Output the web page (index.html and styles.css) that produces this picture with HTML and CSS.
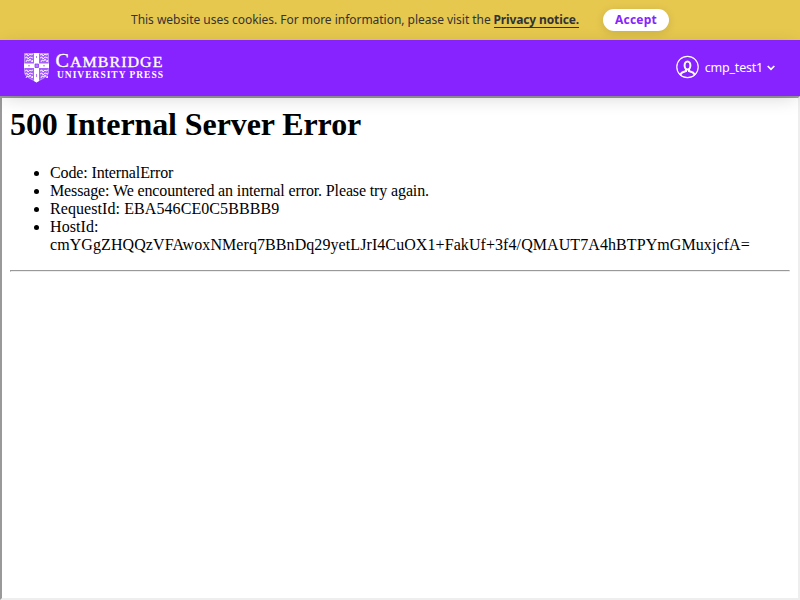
FILE: index.html
```html
<!DOCTYPE html>
<html lang="en">
<head>
<meta charset="utf-8">
<title>Cambridge University Press</title>
<link rel="stylesheet" href="styles.css">
</head>
<body>
<div class="cookies">
  <p class="cookies-text"><span class="cookies-copy">This website uses cookies. For more information, please visit the</span><a class="privacy">Privacy notice.</a></p>
  <button class="accept">Accept</button>
</div>
<header class="header">
  <svg class="logo" width="142" height="32" viewBox="0 0 142 32" role="img">
    <defs>
      <g id="lion" fill="none" stroke="#fff" stroke-width="1" opacity=".85">
        <path d="M1 3l2-1 1 2 2-2 1 1 2-1M1 6l2-1 1 2 2-2 3 1M2 10l1-2 2 1 1-2 2 3M8.500 8v2"/>
      </g>
    </defs>
    <path d="M.5 1.500h24V20c0 5-7 7-12 10C7.500 27 .5 25 .5 20Z" fill="#fff" fill-opacity=".28" stroke="#fff" stroke-opacity=".4"/>
    <use href="#lion"/>
    <use href="#lion" x="15"/>
    <use href="#lion" y="16"/>
    <use href="#lion" x="15" y="16"/>
    <path d="M10 1h5v10.500h10v4.500H15V29l-2.500 1.500L10 29V16H0v-4.500h10Z" fill="#fff"/>
    <path d="M11 12h3.500v3.500H11Z" fill="#b77bff" stroke="#8623ff" stroke-width=".7"/>
    <path d="M12.500 4v2M12.500 22v3M4 13.800h2M19 13.800h2" stroke="#b77bff"/>
    <text class="logo-name" x="31.500" y="15.300" textLength="108" lengthAdjust="spacingAndGlyphs"><tspan font-size="19.500">C</tspan>AMBRIDGE</text>
    <text class="logo-press" x="33" y="26" textLength="106" lengthAdjust="spacing">UNIVERSITY PRESS</text>
  </svg>
  <div class="user">
    <svg width="23" height="24" viewBox="0 0 23 24" fill="none" stroke="#fff">
      <circle cx="11.500" cy="12" r="10.700" stroke-width="1.200"/>
      <ellipse cx="11.500" cy="10.500" rx="2.900" ry="4" stroke-width="2"/>
      <path d="M10 14v2L6 17.700l-2 2.300M13 14v2l4 1.700 2 2.300" stroke-width="2"/>
    </svg>
    <span class="user-name">cmp_test1</span>
    <svg class="chevron" width="8" height="6" viewBox="0 0 8 6" fill="none" stroke="#fff" stroke-width="1.700"><path d="M.7 1 4 4.300 7.300 1"/></svg>
  </div>
</header>
<main class="frame">
  <h1>500 Internal Server Error</h1>
  <ul>
    <li class="tight">Code: InternalError</li>
    <li class="tight">Message: We encountered an internal error. Please try again.</li>
    <li class="loose">RequestId: EBA546CE0C5BBBB9</li>
    <li class="loose">HostId: cmYGgZHQQzVFAwoxNMerq7BBnDq29yetLJrI4CuOX1+FakUf+3f4/QMAUT7A4hBTPYmGMuxjcfA=</li>
  </ul>
  <hr>
</main>
</body>
</html>
```
FILE: styles.css
```css
* { box-sizing: border-box; }
body { margin: 0; height: 600px; display: flex; flex-direction: column; overflow: hidden; background: #fff; }
.cookies {
  flex: none; height: 40px; display: flex; align-items: center; justify-content: center; gap: 24px;
  background: #e6c84f; color: #333; font: 12px/18px "Noto Sans", sans-serif;
}
.cookies-text { margin: 0; display: flex; width: 448px; justify-content: space-between; white-space: nowrap; }
.cookies-copy { letter-spacing: -.03px; }
.privacy { height: 17px; line-height: 18px; font-weight: 700; letter-spacing: -.13px; border-bottom: 1px solid #333; }
.accept {
  width: 66px; height: 22px; padding: 0; border: 0; border-radius: 11px; background: #fff; color: #8623ff;
  font: 700 12px/22px "Noto Sans", sans-serif; letter-spacing: .25px; box-shadow: 0 2px 10px rgba(0, 0, 0, .12);
}
.header {
  flex: none; position: relative; height: 56px; padding: 0 25px 0 24px; display: flex; align-items: center;
  justify-content: space-between; background: #8623ff; color: #fff; box-shadow: 0 4px 20px -4px rgba(0, 0, 0, .2);
}
.logo { display: block; overflow: visible; }
.logo text { fill: #fff; font-family: "Liberation Serif", serif; }
.logo-name { font-size: 15.500px; letter-spacing: 1px; stroke: #fff; stroke-width: .35px; }
.logo-press { font-size: 9.500px; font-weight: 700; }
.user { display: flex; align-items: center; height: 24px; margin-top: -2px; }
.user-name { margin: 1px 4px 0 6px; font: 12.500px/18px "Noto Sans", sans-serif; letter-spacing: -.22px; }
.chevron { margin-top: 2px; }
.frame {
  flex: 1; padding: 8px; border: 2px solid; border-color: #999 #eee #eee #999;
  color: #000; font: 16px/18px "Liberation Serif", serif;
}
h1 { margin: 0 0 21px; font-size: 32px; line-height: 37px; letter-spacing: -.09px; }
ul { margin: 0 0 16px; padding-left: 40px; }
.tight { letter-spacing: -.13px; }
.loose { letter-spacing: .08px; }
hr { margin: 0; border: 1px solid; border-color: #999 #eee #eee #999; }
```
